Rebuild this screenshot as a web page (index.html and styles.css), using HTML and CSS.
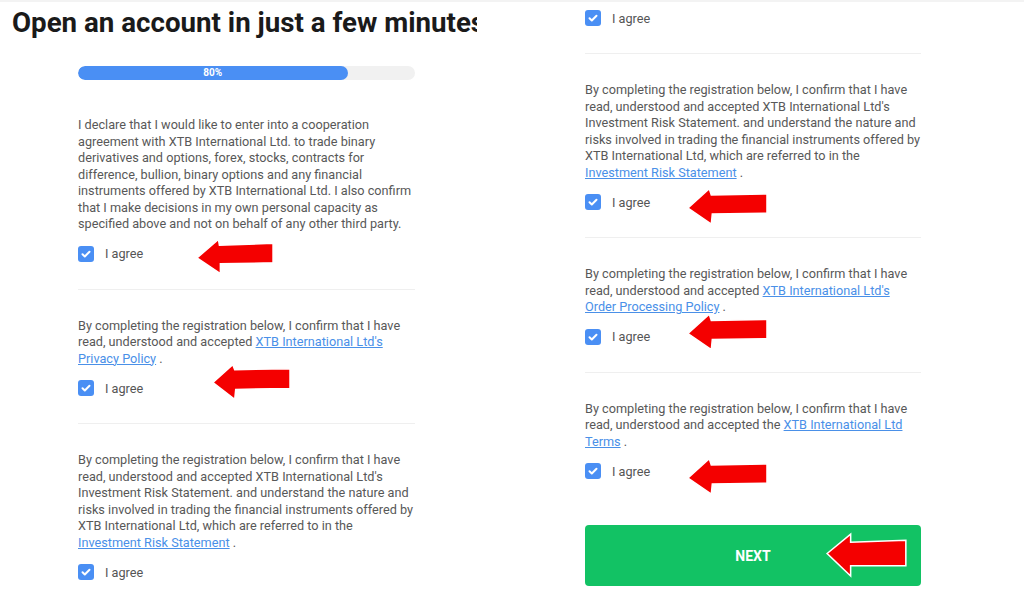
FILE: index.html
```html
<!DOCTYPE html>
<html lang="en">
<head>
<meta charset="utf-8">
<title>Open an account</title>
<link rel="stylesheet" href="styles.css">
</head>
<body>
<div class="page">
  <section class="panel panel-left">
    <h1 class="title">Open an account in just a few minutes</h1>
    <div class="col">
      <div class="progress"><div class="progress-fill" style="width:80%"><span>80%</span></div></div>
      <div class="block first">
        <p class="txt">I declare that I would like to enter into a cooperation agreement with XTB International Ltd. to trade binary derivatives and options, forex, stocks, contracts for difference, bullion, binary options and any financial instruments offered by XTB International Ltd. I also confirm that I make decisions in my own personal capacity as specified above and not on behalf of any other third party.</p>
        <label class="agree"><span class="cb"><svg viewBox="0 0 16 16"><path d="M4.5 8.3l2.3 2.2 4.7-4.8" fill="none" stroke="#fff" stroke-width="2" stroke-linecap="round" stroke-linejoin="round"/></svg></span>I agree</label>
      </div>
      <div class="block">
        <p class="txt">By completing the registration below, I confirm that I have read, understood and accepted <a href="#">XTB International Ltd's Privacy Policy</a> .</p>
        <label class="agree"><span class="cb"><svg viewBox="0 0 16 16"><path d="M4.5 8.3l2.3 2.2 4.7-4.8" fill="none" stroke="#fff" stroke-width="2" stroke-linecap="round" stroke-linejoin="round"/></svg></span>I agree</label>
      </div>
      <div class="block last">
        <p class="txt">By completing the registration below, I confirm that I have read, understood and accepted XTB International Ltd's Investment Risk Statement. and understand the nature and risks involved in trading the financial instruments offered by XTB International Ltd, which are referred to in the <a href="#">Investment Risk Statement</a> .</p>
        <label class="agree"><span class="cb"><svg viewBox="0 0 16 16"><path d="M4.5 8.3l2.3 2.2 4.7-4.8" fill="none" stroke="#fff" stroke-width="2" stroke-linecap="round" stroke-linejoin="round"/></svg></span>I agree</label>
      </div>
    </div>
  </section>
  <section class="panel panel-right">
    <div class="col col-right">
      <div class="block top">
        <label class="agree"><span class="cb"><svg viewBox="0 0 16 16"><path d="M4.5 8.3l2.3 2.2 4.7-4.8" fill="none" stroke="#fff" stroke-width="2" stroke-linecap="round" stroke-linejoin="round"/></svg></span>I agree</label>
      </div>
      <div class="block">
        <p class="txt">By completing the registration below, I confirm that I have read, understood and accepted XTB International Ltd's Investment Risk Statement. and understand the nature and risks involved in trading the financial instruments offered by XTB International Ltd, which are referred to in the <a href="#">Investment Risk Statement</a> .</p>
        <label class="agree"><span class="cb"><svg viewBox="0 0 16 16"><path d="M4.5 8.3l2.3 2.2 4.7-4.8" fill="none" stroke="#fff" stroke-width="2" stroke-linecap="round" stroke-linejoin="round"/></svg></span>I agree</label>
      </div>
      <div class="block">
        <p class="txt">By completing the registration below, I confirm that I have read, understood and accepted <a href="#">XTB International Ltd's Order Processing Policy</a> .</p>
        <label class="agree"><span class="cb"><svg viewBox="0 0 16 16"><path d="M4.5 8.3l2.3 2.2 4.7-4.8" fill="none" stroke="#fff" stroke-width="2" stroke-linecap="round" stroke-linejoin="round"/></svg></span>I agree</label>
      </div>
      <div class="block last">
        <p class="txt">By completing the registration below, I confirm that I have read, understood and accepted the <a href="#">XTB International Ltd Terms</a> .</p>
        <label class="agree"><span class="cb"><svg viewBox="0 0 16 16"><path d="M4.5 8.3l2.3 2.2 4.7-4.8" fill="none" stroke="#fff" stroke-width="2" stroke-linecap="round" stroke-linejoin="round"/></svg></span>I agree</label>
      </div>
      <button class="next" type="button">NEXT</button>
    </div>
  </section>

  <svg class="arrow a1" viewBox="0 0 80 37"><polygon points="1,20 23,1 24,7 79,5 79,25 25,26 25,36"/></svg>
  <svg class="arrow a2" viewBox="0 0 80 37"><polygon points="1,19 21,1 23,6 79,5 79,25 24,26 23,36"/></svg>
  <svg class="arrow a3" viewBox="0 0 80 37"><polygon points="1,20 22,1 24,7 79,6 79,25 25,26 24,36"/></svg>
  <svg class="arrow a4" viewBox="0 0 80 37"><polygon points="1,20 22,1 24,7 79,6 79,25 25,26 24,36"/></svg>
  <svg class="arrow a5" viewBox="0 0 80 37"><polygon points="1,20 22,1 24,7 79,6 79,25 25,26 24,36"/></svg>
  <svg class="arrow a6" viewBox="0 0 82 45"><polygon points="2,21 25,2 25,10 79,8 79,33 25,33 25,43"/></svg>
</div>
</body>
</html>
```

FILE: styles.css
```css
* { box-sizing: border-box; }
html, body { margin: 0; padding: 0; background: #fff; }
body {
  font-family: Roboto, "Liberation Sans", Arial, sans-serif;
  color: #555;
  width: 1024px;
  height: 600px;
  overflow: hidden;
}
.page {
  position: relative;
  display: flex;
  width: 1024px;
  height: 600px;
  border-top: 2px solid #f3f3f3;
}
.panel { height: 100%; overflow: hidden; }
.panel-left { width: 477px; flex: none; }
.panel-right { flex: 1; padding-left: 108px; }

.title {
  margin: 5px 0 0 12px;
  font-size: 27.7px;
  line-height: 32px;
  font-weight: 700;
  color: #1a1a1a;
  white-space: nowrap;
}
.col { margin-left: 78px; width: 337px; }
.col-right { margin-left: 0; width: 336px; }

.progress {
  margin-top: 27px;
  height: 14px;
  border-radius: 7px;
  background: #f1f1f1;
  overflow: hidden;
}
.progress-fill {
  height: 100%;
  background: #4a8ff4;
  border-radius: 7px;
  display: flex;
  align-items: center;
  justify-content: center;
}
.progress-fill span {
  color: #fff;
  font-size: 10px;
  font-weight: 700;
  line-height: 1;
}

.block {
  padding: 28px 0 25px;
  border-bottom: 1px solid #efefef;
}
.block.first { padding-top: 37px; }
.block.last { border-bottom: none; }
.block.top { padding-top: 6px; }

.txt {
  margin: 0 0 11px;
  font-size: 12.7px;
  line-height: 16.5px;
  color: #585858;
}
.txt a { color: #4a90e8; text-decoration: underline; }

.agree {
  display: flex;
  align-items: center;
  height: 20px;
  font-size: 12.7px;
  color: #555;
}
.cb {
  width: 16px;
  height: 16px;
  border-radius: 3px;
  background: #4a8ff4;
  margin-right: 11px;
  display: inline-flex;
}
.cb svg { width: 16px; height: 16px; }

.next {
  display: block;
  width: 336px;
  height: 61px;
  margin-top: 19px;
  border: none;
  border-radius: 4px;
  background: #12c264;
  color: #fff;
  font-family: Roboto, "Liberation Sans", Arial, sans-serif;
  font-size: 14px;
  font-weight: 700;
}

.arrow { position: absolute; overflow: visible; }
.arrow polygon { fill: #f40000; stroke: #fff; stroke-width: 1.5; stroke-linejoin: miter; }
.a1 { left: 196px; top: 235px; width: 78px; height: 39px; }
.a2 { left: 212px; top: 361px; width: 79px; height: 38px; }
.a3 { left: 687px; top: 185px; width: 81px; height: 39px; }
.a4 { left: 687px; top: 311px; width: 81px; height: 38px; }
.a5 { left: 687px; top: 455px; width: 81px; height: 39px; }
.a6 { left: 825px; top: 530px; width: 84px; height: 46px; }
```
